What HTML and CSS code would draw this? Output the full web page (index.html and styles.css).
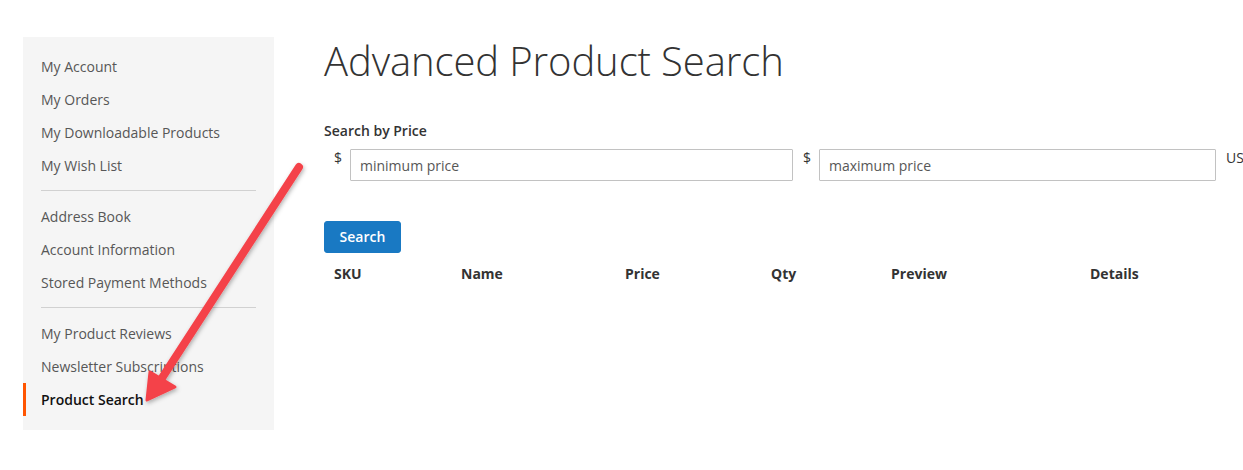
FILE: index.html
```html
<!DOCTYPE html>
<html lang="en">
<head>
<meta charset="utf-8">
<title>Advanced Product Search</title>
<link rel="stylesheet" href="styles.css">
</head>
<body>
<div class="page">
  <nav class="sidebar">
    <ul class="nav">
      <li class="nav-item">My Account</li>
      <li class="nav-item">My Orders</li>
      <li class="nav-item">My Downloadable Products</li>
      <li class="nav-item">My Wish List</li>
      <li class="divider"></li>
      <li class="nav-item">Address Book</li>
      <li class="nav-item">Account Information</li>
      <li class="nav-item">Stored Payment Methods</li>
      <li class="divider"></li>
      <li class="nav-item">My Product Reviews</li>
      <li class="nav-item">Newsletter Subscriptions</li>
      <li class="nav-item active">Product Search</li>
    </ul>
  </nav>
  <main class="main">
    <h1 class="title">Advanced Product Search</h1>
    <div class="label">Search by Price</div>
    <div class="price-row">
      <span class="cur">$</span>
      <input class="field field-min" type="text" placeholder="minimum price">
      <span class="cur">$</span>
      <input class="field field-max" type="text" placeholder="maximum price">
      <span class="unit">USD</span>
    </div>
    <button class="btn" type="button">Search</button>
    <div class="thead">
      <span class="th">SKU</span>
      <span class="th">Name</span>
      <span class="th">Price</span>
      <span class="th">Qty</span>
      <span class="th">Preview</span>
      <span class="th">Details</span>
    </div>
  </main>
</div>
<svg class="arrow" width="1243" height="470" viewBox="0 0 1243 470">
  <defs>
    <filter id="sh" x="-20%" y="-20%" width="140%" height="140%">
      <feDropShadow dx="1" dy="2" stdDeviation="2" flood-color="#000" flood-opacity="0.3"/>
    </filter>
  </defs>
  <g filter="url(#sh)" fill="#f4434a" stroke="#f4434a">
    <line x1="299" y1="167" x2="162" y2="378" stroke-width="8" stroke-linecap="round"/>
    <polygon points="147,400 150,372 175,387" stroke-width="3" stroke-linejoin="round"/>
  </g>
</svg>
</body>
</html>
```
FILE: styles.css
```css
html, body {
  margin: 0;
  padding: 0;
  overflow: hidden;
  background: #fff;
}
body {
  font-family: "Open Sans", "Liberation Sans", sans-serif;
  font-size: 14px;
  color: #333;
  width: 1243px;
  height: 470px;
  position: relative;
}
.page {
  display: flex;
  align-items: flex-start;
  gap: 50px;
  padding: 37px 0 0 23px;
  width: 1300px;
}
.sidebar {
  flex: 0 0 251px;
  background: #f5f5f5;
  padding: 13px 0 14px;
}
.nav {
  list-style: none;
  margin: 0;
  padding: 0;
}
.nav-item {
  line-height: 23px;
  padding: 5px 18px;
  color: #575757;
  border-left: 3px solid transparent;
  padding-left: 15px;
}
.nav-item.active {
  border-left-color: #ff5501;
  color: #111;
  font-weight: 600;
}
.divider {
  border-top: 1px solid #d1d1d1;
  margin: 8px 18px 9px;
}
.main {
  flex: 1;
}
.title {
  margin: 0;
  font-weight: 300;
  font-size: 40px;
  line-height: 48px;
  color: #333;
  letter-spacing: -0.1px;
}
.label {
  margin-top: 36px;
  font-weight: 600;
  line-height: 20px;
}
.price-row {
  display: flex;
  align-items: flex-start;
  margin-top: 8px;
}
.cur {
  margin-left: 10px;
  width: 16px;
  line-height: 18px;
}
.field {
  box-sizing: border-box;
  height: 32px;
  border: 1px solid #c2c2c2;
  border-radius: 1px;
  padding: 0 9px;
  font-family: inherit;
  font-size: 14px;
  color: #333;
  background: #fff;
  margin: 0;
}
.field::placeholder {
  color: #575757;
  opacity: 1;
}
.field-min { width: 443px; }
.field-max { width: 397px; }
.unit {
  margin-left: 10px;
  line-height: 18px;
}
.btn {
  display: block;
  margin-top: 40px;
  width: 77px;
  height: 32px;
  background: #1979c3;
  border: 1px solid #1979c3;
  border-radius: 3px;
  color: #fff;
  font-family: inherit;
  font-size: 14px;
  font-weight: 600;
  padding: 0 0 2px;
}
.thead {
  display: grid;
  grid-template-columns: 127px 164px 146px 120px 199px 150px;
  margin-top: 11px;
  font-weight: 700;
  line-height: 20px;
}
.th {
  padding-left: 10px;
}
.arrow {
  position: absolute;
  left: 0;
  top: 0;
  pointer-events: none;
}
```
